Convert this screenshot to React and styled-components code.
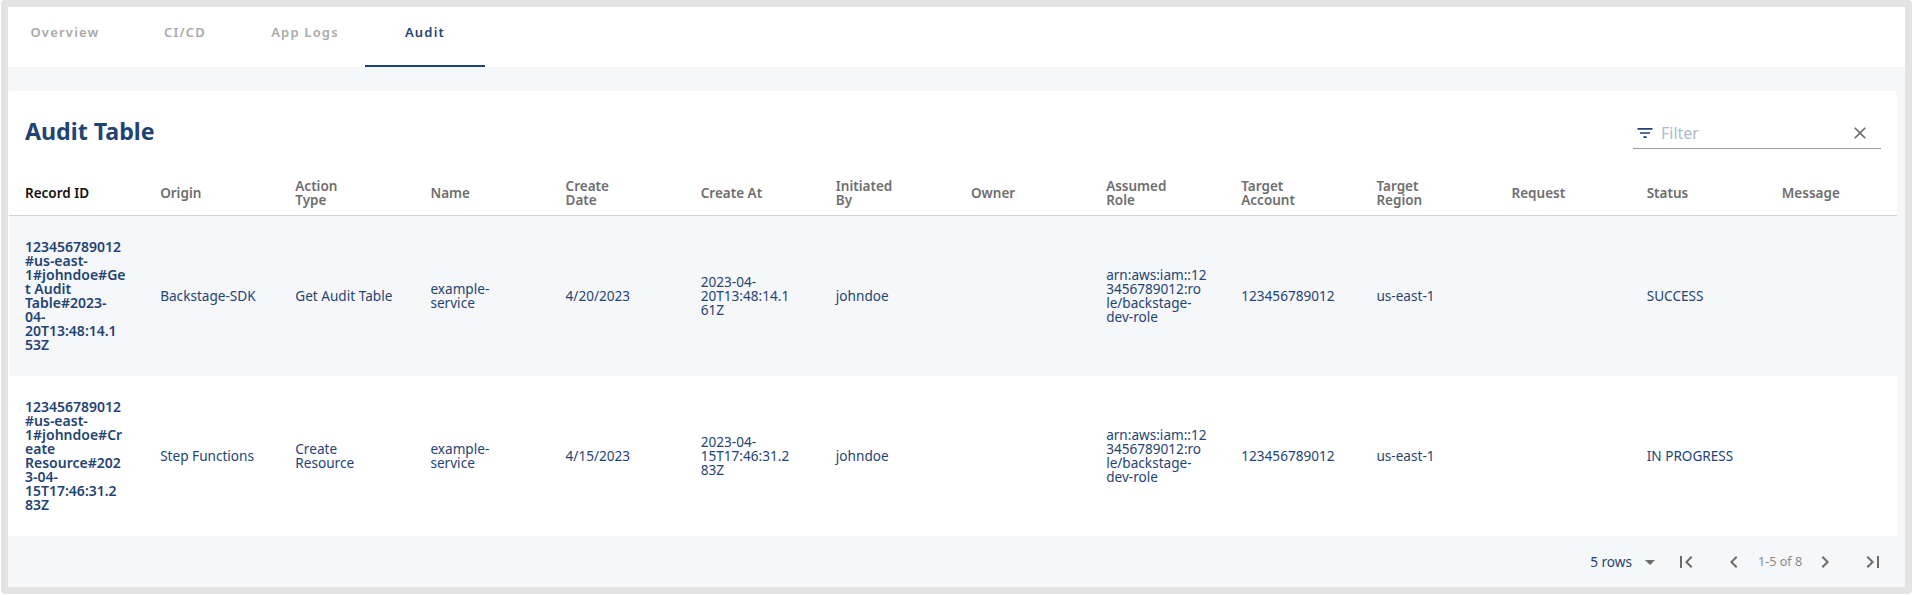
import React from 'react';
import styled, { createGlobalStyle } from 'styled-components';

const NAVY = '#1f4474';

const GlobalStyle = createGlobalStyle`
  html, body { margin: 0; padding: 0; background: #fff; }
  body { font-family: "Noto Sans", "Liberation Sans", sans-serif; }
`;

const Frame = styled.div`
  box-sizing: border-box;
  width: 1911px;
  height: 594px;
  margin-left: 1px;
  border: 7px solid #e3e3e3;
  border-radius: 4px;
  background: #f6f7f9;
  display: flex;
  flex-direction: column;
  overflow: hidden;
`;

const TabBar = styled.div`
  height: 60px;
  flex: none;
  display: flex;
  background: #fff;
`;

const Tab = styled.div`
  box-sizing: border-box;
  width: 120px;
  height: 60px;
  padding-top: 18px;
  text-align: center;
  font-size: 13px;
  line-height: 14px;
  font-weight: 600;
  letter-spacing: 1.2px;
  color: ${({ $active }) => ($active ? NAVY : '#a9a9a9')};
  border-bottom: 2px solid ${({ $active }) => ($active ? NAVY : 'transparent')};
  &:first-child { margin-left: -3px; }
`;

const Content = styled.div`
  flex: 1;
  padding: 24px 8px 0 0;
  display: flex;
  flex-direction: column;
`;

const Card = styled.div`
  background: #fff;
  border-radius: 4px 4px 0 0;
  overflow: hidden;
`;

const TitleRow = styled.div`
  height: 80px;
  padding: 0 16px 0 17px;
  display: flex;
  align-items: center;
  justify-content: space-between;
`;

const Title = styled.h2`
  margin: 0;
  font-size: 23.2px;
  line-height: 32px;
  font-weight: 700;
  color: ${NAVY};
`;

const FilterBox = styled.div`
  box-sizing: border-box;
  width: 248px;
  height: 33px;
  margin-top: 2px;
  padding: 2px 11px 0 2px;
  display: flex;
  align-items: center;
  border-bottom: 1px solid #9a9a9a;
`;

const FilterLabel = styled.span`
  flex: 1;
  margin-left: 6px;
  font-size: 16px;
  color: #aebbcd;
`;

const Icon = styled.svg`
  display: block;
  flex: none;
  fill: ${({ $color }) => $color || '#6b6b6b'};
`;

const Table = styled.table`
  width: 1892px;
  table-layout: fixed;
  border-collapse: collapse;
  margin-left: 1px;
`;

const HeadRow = styled.tr`
  border-bottom: 1px solid #d2d2d2;
`;

const HeadCell = styled.th`
  box-sizing: border-box;
  width: 135.15px;
  padding: 8px 16px;
  text-align: left;
  vertical-align: middle;
  font-size: 13.5px;
  line-height: 14px;
  font-weight: 600;
  color: ${({ $first }) => ($first ? '#111' : '#6e6e6e')};
`;

const Row = styled.tr`
  background: ${({ $shaded }) => ($shaded ? '#f6f7f9' : '#fff')};
`;

const Cell = styled.td`
  box-sizing: border-box;
  height: 160px;
  padding: 24px 16px;
  vertical-align: middle;
  white-space: nowrap;
  font-size: ${({ $first }) => ($first ? '14px' : '13.6px')};
  line-height: 14px;
  font-weight: ${({ $first }) => ($first ? 600 : 400)};
  color: ${NAVY};
`;

const Footer = styled.div`
  height: 51px;
  padding-right: 12px;
  display: flex;
  align-items: center;
  justify-content: flex-end;
`;

const RowsLabel = styled.span`
  font-size: 13.6px;
  color: ${NAVY};
`;

const PageLabel = styled.span`
  width: 42px;
  margin: 0 13px 0 12px;
  text-align: center;
  font-size: 12.6px;
  white-space: nowrap;
  color: #8a8a8a;
`;

const PageButton = styled.span`
  margin-left: ${({ $gap }) => $gap || 0}px;
  display: block;
`;

const paths = {
  filter: 'M10 18h4v-2h-4v2zM3 6v2h18V6H3zm3 7h12v-2H6v2z',
  clear: 'M19 6.41 17.59 5 12 10.59 6.41 5 5 6.41 10.59 12 5 17.59 6.41 19 12 13.41 17.59 19 19 17.59 13.41 12z',
  first: 'M18.41 16.59L13.82 12l4.59-4.59L17 6l-6 6 6 6zM6 6h2v12H6z',
  last: 'M5.59 7.41L10.18 12l-4.59 4.59L7 18l6-6-6-6zM16 6h2v12h-2z',
  prev: 'M15.41 7.41L14 6l-6 6 6 6 1.41-1.41L10.83 12z',
  next: 'M10 6L8.59 7.41 13.17 12l-4.58 4.59L10 18l6-6z',
  caret: 'M7 10l5 5 5-5z',
};

const Glyph = ({ name, size = 24, color }) => (
  <Icon viewBox="0 0 24 24" width={size} height={size} $color={color}>
    <path d={paths[name]} />
  </Icon>
);

const columns = [
  ['Record ID'], ['Origin'], ['Action', 'Type'], ['Name'], ['Create', 'Date'], ['Create At'],
  ['Initiated', 'By'], ['Owner'], ['Assumed', 'Role'], ['Target', 'Account'], ['Target', 'Region'],
  ['Request'], ['Status'], ['Message'],
];

const arn = ['arn:aws:iam::12', '3456789012:ro', 'le/backstage-', 'dev-role'];

const rows = [
  [
    ['123456789012', '#us-east-', '1#johndoe#Ge', 't Audit', 'Table#2023-', '04-', '20T13:48:14.1', '53Z'],
    ['Backstage-SDK'], ['Get Audit Table'], ['example-', 'service'], ['4/20/2023'],
    ['2023-04-', '20T13:48:14.1', '61Z'], ['johndoe'], [], arn, ['123456789012'], ['us-east-1'], [],
    ['SUCCESS'], [],
  ],
  [
    ['123456789012', '#us-east-', '1#johndoe#Cr', 'eate', 'Resource#202', '3-04-', '15T17:46:31.2', '83Z'],
    ['Step Functions'], ['Create', 'Resource'], ['example-', 'service'], ['4/15/2023'],
    ['2023-04-', '15T17:46:31.2', '83Z'], ['johndoe'], [], arn, ['123456789012'], ['us-east-1'], [],
    ['IN PROGRESS'], [],
  ],
];

const Lines = ({ lines }) =>
  lines.map((line, i) => (
    <React.Fragment key={i}>
      {i > 0 && <br />}
      {line}
    </React.Fragment>
  ));

export default function App() {
  return (
    <>
      <GlobalStyle />
      <Frame>
        <TabBar>
          <Tab>Overview</Tab>
          <Tab>CI/CD</Tab>
          <Tab>App Logs</Tab>
          <Tab $active>Audit</Tab>
        </TabBar>
        <Content>
          <Card>
            <TitleRow>
              <Title>Audit Table</Title>
              <FilterBox>
                <Glyph name="filter" size={20} color={NAVY} />
                <FilterLabel>Filter</FilterLabel>
                <Glyph name="clear" size={20} color="#6e6e6e" />
              </FilterBox>
            </TitleRow>
            <Table>
              <thead>
                <HeadRow>
                  {columns.map((lines, i) => (
                    <HeadCell key={i} $first={i === 0}>
                      <Lines lines={lines} />
                    </HeadCell>
                  ))}
                </HeadRow>
              </thead>
              <tbody>
                {rows.map((row, r) => (
                  <Row key={r} $shaded={r === 0}>
                    {row.map((lines, i) => (
                      <Cell key={i} $first={i === 0}>
                        <Lines lines={lines} />
                      </Cell>
                    ))}
                  </Row>
                ))}
              </tbody>
            </Table>
          </Card>
          <Footer>
            <RowsLabel>5 rows</RowsLabel>
            <PageButton $gap={6}><Glyph name="caret" /></PageButton>
            <PageButton $gap={12}><Glyph name="first" /></PageButton>
            <PageButton $gap={24}><Glyph name="prev" /></PageButton>
            <PageLabel>1-5 of 8</PageLabel>
            <PageButton><Glyph name="next" /></PageButton>
            <PageButton $gap={24}><Glyph name="last" /></PageButton>
          </Footer>
        </Content>
      </Frame>
    </>
  );
}
